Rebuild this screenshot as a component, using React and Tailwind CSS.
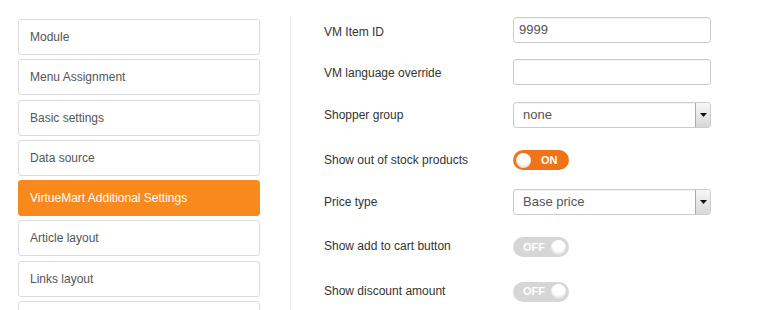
import React from "react";

const menu = [
  "Module",
  "Menu Assignment",
  "Basic settings",
  "Data source",
  "VirtueMart Additional Settings",
  "Article layout",
  "Links layout",
  "",
];

function Toggle({ on }) {
  if (on) {
    return (
      <div className="w-[56px] h-[20px] rounded-full bg-[#f07417] flex items-center pl-[3px] gap-[10px]">
        <span className="w-[15px] h-[15px] rounded-full bg-white shadow-[inset_0_-2px_2px_rgba(0,0,0,0.12)]" />
        <span className="text-white text-[11px] font-bold">ON</span>
      </div>
    );
  }
  return (
    <div className="w-[56px] h-[20px] rounded-full bg-[#d6d6d6] flex items-center justify-between pl-[10px] pr-[3px]">
      <span className="text-white text-[11px] font-bold">OFF</span>
      <span className="w-[15px] h-[15px] rounded-full bg-white shadow-[inset_0_-2px_2px_rgba(0,0,0,0.12)]" />
    </div>
  );
}

function Select({ value }) {
  return (
    <div className="w-[198px] h-[26px] border border-[#ccc] rounded-[3px] flex items-stretch bg-white shadow-[inset_0_1px_1px_rgba(0,0,0,0.05)]">
      <div className="flex-1 flex items-center pl-[9px] text-[#555] text-[13px]">{value}</div>
      <div className="w-[15px] border-l border-[#aaa] bg-gradient-to-b from-[#f7f7f7] to-[#d8d8d8] flex items-center justify-center rounded-r-[2px]">
        <svg width="7" height="4" viewBox="0 0 7 4">
          <path d="M0 0h7L3.5 4z" fill="#111" />
        </svg>
      </div>
    </div>
  );
}

function TextInput({ value }) {
  return (
    <div className="w-[198px] h-[26px] border border-[#ccc] rounded-[3px] bg-white flex items-center pl-[5px] text-[#555] text-[13px] shadow-[inset_0_1px_1px_rgba(0,0,0,0.05)]">
      {value}
    </div>
  );
}

// row height + label nudge, read off the screenshot
const rows = [
  ["VM Item ID", <TextInput value="9999" />, "h-[43px]", "mt-[5px]"],
  ["VM language override", <TextInput value="" />, "h-[42px]", "mt-[2px]"],
  ["Shopper group", <Select value="none" />, "h-[43px]", "mt-[1px]"],
  ["Show out of stock products", <Toggle on />, "h-[48px]", "-mt-[1px]"],
  ["Price type", <Select value="Base price" />, "h-[36px]", "mt-[0px]"],
  ["Show add to cart button", <Toggle />, "h-[54px]", "-mt-[3px]"],
  ["Show discount amount", <Toggle />, "h-[35px]", "-mt-[2px]"],
];

export default function App() {
  return (
    <div
      className="h-[310px] w-[760px] overflow-hidden bg-white flex text-[12px]"
      style={{ fontFamily: '"Liberation Sans", Arial, sans-serif' }}
    >
      <div className="w-[242px] ml-[18px] pt-[19px] flex flex-col gap-[4.3px] shrink-0">
        {menu.map((item, i) => (
          <div
            key={i}
            className={
              item === "VirtueMart Additional Settings"
                ? "h-9 shrink-0 rounded-[3px] bg-[#f7891d] border border-[#f7891d] text-white flex items-center px-[11px]"
                : "h-9 shrink-0 rounded-[3px] bg-white border border-[#dcdcdc] text-[#555] flex items-center px-[11px]"
            }
          >
            {item}
          </div>
        ))}
      </div>
      <div className="ml-[30px] mt-[16px] border-l border-[#ececec] pl-[33px] flex-1">
        <div className="-mt-[8px] flex flex-col">
          {rows.map(([label, control, h, off]) => (
            <div key={label} className={h + " shrink-0 flex items-center"}>
              <div className={"w-[189px] text-[#333] " + off}>{label}</div>
              {control}
            </div>
          ))}
        </div>
      </div>
    </div>
  );
}
